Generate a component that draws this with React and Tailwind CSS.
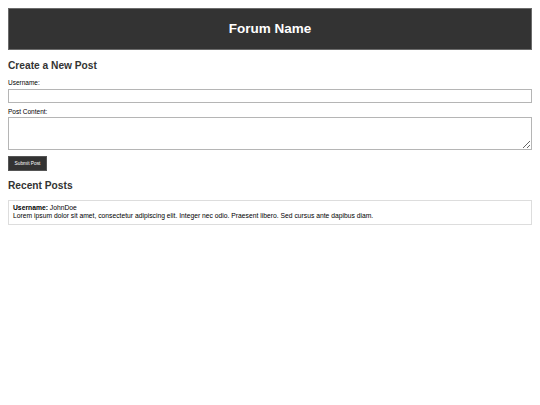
export default function App() {
  const posts = [
    {
      id: 1,
      username: "JohnDoe",
      content:
        "Lorem ipsum dolor sit amet, consectetur adipiscing elit. Integer nec odio. Praesent libero. Sed cursus ante dapibus diam.",
    },
  ];

  return (
    <div className="min-h-[405px] bg-white p-2 font-['Liberation_Sans',Arial,sans-serif] text-[#333]">
      {/* Header */}
      <header className="flex h-[42px] items-center justify-center border border-[#6b6b6b] bg-[#333]">
        <h1 className="text-[13.5px] font-bold leading-none text-white">Forum Name</h1>
      </header>

      {/* New post form */}
      <section className="mt-[9px]">
        <h2 className="text-[10.2px] font-bold leading-[13px]">Create a New Post</h2>
        <div className="mt-[6px]">
          <label className="block text-[6.5px] leading-[9px] text-black">Username:</label>
          <input
            type="text"
            className="mt-[2px] block h-[14px] w-full border border-[#b5b5b5] bg-white"
          />
        </div>
        <div className="mt-[4px]">
          <label className="block text-[6.5px] leading-[9px] text-black">Post Content:</label>
          <textarea className="mt-[1px] block h-[33px] w-full resize-y border border-[#b5b5b5] bg-white" />
        </div>
        <button className="mt-[6px] flex h-[15px] w-[39px] items-center justify-center border border-[#555] bg-[#333] text-[4.8px] text-white">
          Submit Post
        </button>
      </section>

      {/* Recent posts */}
      <section className="mt-[8px]">
        <h2 className="text-[10.2px] font-bold leading-[13px]">Recent Posts</h2>
        <div className="mt-[8px]">
          {posts.map((p) => (
            <div key={p.id} className="h-[25px] border border-[#ddd] px-[4px] pt-[3px] text-[6.75px] leading-[8px] text-black">
              <p>
                <strong>Username:</strong> {p.username}
              </p>
              <p>{p.content}</p>
            </div>
          ))}
        </div>
      </section>
    </div>
  );
}
